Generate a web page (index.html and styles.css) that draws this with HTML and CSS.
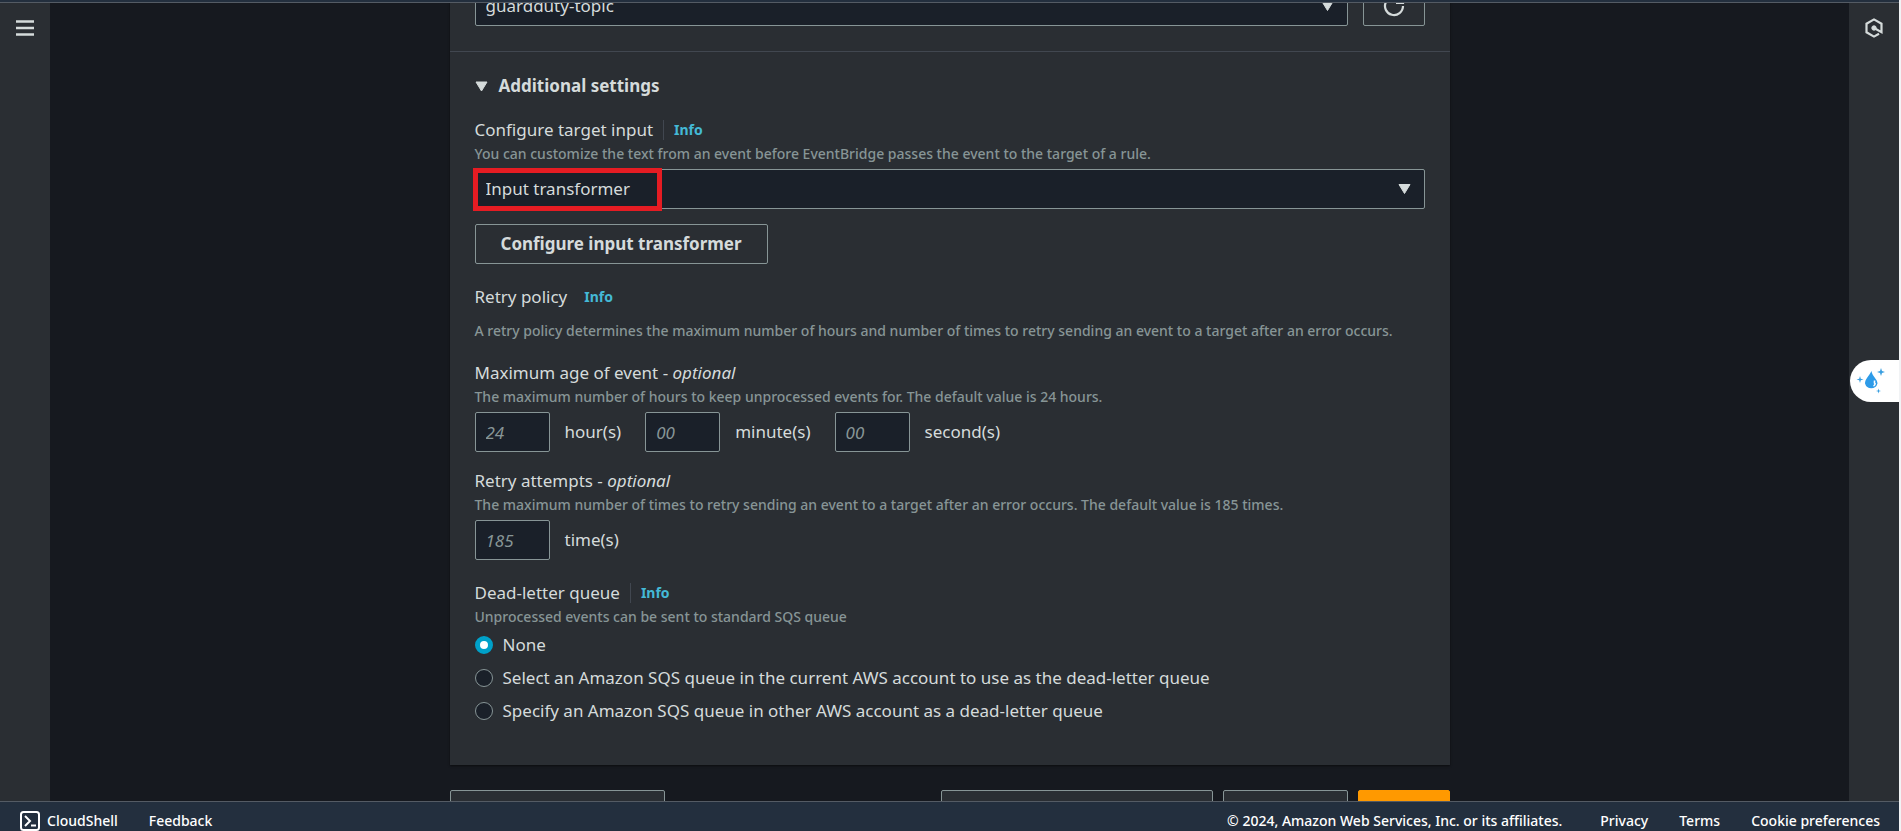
FILE: index.html
```html
<!DOCTYPE html>
<html lang="en">
<head>
<meta charset="utf-8">
<title>Amazon EventBridge</title>
<link rel="stylesheet" href="styles.css">
</head>
<body>
<div class="topbar"></div>
<div class="workspace">
  <nav class="rail rail-left">
    <button class="icon-button" aria-label="Open navigation">
      <svg width="18" height="16" viewBox="0 0 18 16"><path d="M0 1.5h18M0 8h18M0 14.5h18" stroke="currentColor" stroke-width="2.4"/></svg>
    </button>
  </nav>
  <main class="content">
    <div class="container">
      <section class="card">
        <div class="topic-row">
          <div class="select-wrap">
            <select class="select" aria-label="Topic"><option>guardduty-topic</option></select>
            <svg class="caret" width="13" height="10" viewBox="0 0 13 10"><path d="M1 .5h11L6.500 9.500z" fill="currentColor" stroke="currentColor" stroke-linejoin="round"/></svg>
          </div>
          <button class="btn refresh" aria-label="Refresh">
            <svg width="22" height="22" viewBox="0 0 22 22" fill="none" stroke="currentColor" stroke-width="2.200"><path d="M20 11a9 9 0 1 1-3-6.700M20 1v7h-7"/></svg>
          </button>
        </div>
        <details class="settings" open>
          <summary class="summary">
            <svg width="13" height="11" viewBox="0 0 13 11"><path d="M1 1h11L6.500 10z" fill="currentColor" stroke="currentColor" stroke-linejoin="round"/></svg>
            Additional settings
          </summary>
          <div class="field">
            <div class="label-row">
              <label for="target-input">Configure target input</label>
              <a class="info divided" href="#">Info</a>
            </div>
            <p class="hint">You can customize the text from an event before EventBridge passes the event to the target of a rule.</p>
            <div class="select-wrap control">
              <select class="select" id="target-input"><option>Input transformer</option></select>
              <svg class="caret" width="13" height="10" viewBox="0 0 13 10"><path d="M1 .5h11L6.500 9.500z" fill="currentColor" stroke="currentColor" stroke-linejoin="round"/></svg>
              <span class="highlight"></span>
            </div>
            <button class="btn configure">Configure input transformer</button>
          </div>
          <div class="policy">
            <div class="label-row"><span>Retry policy</span><a class="info" href="#">Info</a></div>
            <p class="hint">A retry policy determines the maximum number of hours and number of times to retry sending an event to a target after an error occurs.</p>
          </div>
          <div class="field">
            <div class="label-row"><span>Maximum age of event - <em>optional</em></span></div>
            <p class="hint">The maximum number of hours to keep unprocessed events for. The default value is 24 hours.</p>
            <div class="units control">
              <div class="unit"><input class="input" id="hours" placeholder="24"><label for="hours">hour(s)</label></div>
              <div class="unit"><input class="input" id="minutes" placeholder="00"><label for="minutes">minute(s)</label></div>
              <div class="unit"><input class="input" id="seconds" placeholder="00"><label for="seconds">second(s)</label></div>
            </div>
          </div>
          <div class="field attempts">
            <div class="label-row"><span>Retry attempts - <em>optional</em></span></div>
            <p class="hint">The maximum number of times to retry sending an event to a target after an error occurs. The default value is 185 times.</p>
            <div class="units control">
              <div class="unit"><input class="input" id="times" placeholder="185"><label for="times">time(s)</label></div>
            </div>
          </div>
          <div class="field" role="radiogroup" aria-labelledby="dlq">
            <div class="label-row"><span id="dlq">Dead-letter queue</span><a class="info divided" href="#">Info</a></div>
            <p class="hint">Unprocessed events can be sent to standard SQS queue</p>
            <div class="radios">
              <label class="radio"><input type="radio" name="dlq" checked>None</label>
              <label class="radio"><input type="radio" name="dlq">Select an Amazon SQS queue in the current AWS account to use as the dead-letter queue</label>
              <label class="radio"><input type="radio" name="dlq">Specify an Amazon SQS queue in other AWS account as a dead-letter queue</label>
            </div>
          </div>
        </details>
      </section>
      <div class="actions">
        <button class="btn action-wide" aria-label="Add another target"></button>
        <button class="btn action-skip" aria-label="Skip to review"></button>
        <button class="btn action-prev" aria-label="Previous"></button>
        <button class="btn action-next" aria-label="Next"></button>
      </div>
    </div>
  </main>
  <aside class="rail rail-right">
    <button class="icon-button" aria-label="Amazon Q">
      <svg width="20" height="20" viewBox="0 0 20 20" fill="none" stroke="currentColor" stroke-width="2.200"><path d="M10 10l7.500 4.200V5.700L10 1.400 2.500 5.700v8.600l7.500 4.300 5-2.900"/><circle cx="10" cy="10" r="2.200" fill="currentColor" stroke-width="1"/></svg>
    </button>
    <button class="droplet" aria-label="Assistant">
      <svg width="30" height="26" viewBox="0 0 30 26"><path d="M15.500 3C13 8 9 11 9 15.500a6.500 6.500 0 0 0 12.500 0C21.500 11 16 8 15.500 3z" fill="#2e9be8"/><path d="M18.500 12.500v3M17.500 18q1.800-.8 1.600-2.800" stroke="#fff" stroke-width="1.600" fill="none"/><path d="M25 0l1 3 3 1-3 1-1 3-1-3-3-1 3-1zM4 8l.8 2.700L7.500 11.500l-2.700.8L4 15l-.8-2.700L.5 11.500l2.700-.8zM22.500 20.500l.6 1.900 1.900.6-1.900.6-.6 1.900-.6-1.900-1.900-.6 1.900-.6z" fill="#3a9fe0"/></svg>
    </button>
  </aside>
</div>
<footer class="footer">
  <a class="shell" href="#">
    <svg width="20" height="20" viewBox="0 0 20 20" fill="none" stroke="currentColor" stroke-width="2"><rect x="1" y="1" width="18" height="18" rx="2.500"/><path d="M5 5l5 5-5 5M11 14.500h5"/></svg>
    CloudShell
  </a>
  <a class="feedback" href="#">Feedback</a>
  <span class="copyright">© 2024, Amazon Web Services, Inc. or its affiliates.</span>
  <a href="#">Privacy</a>
  <a href="#">Terms</a>
  <a href="#">Cookie preferences</a>
</footer>
</body>
</html>
```
FILE: styles.css
```css
* { box-sizing: border-box; }

body {
  margin: 0;
  height: 100vh;
  display: flex;
  flex-direction: column;
  overflow: hidden;
  border-right: 2px solid #f1f3f5;
  background: #16191f;
  color: #d5dbdb;
  font: 17px/24px "Noto Sans", "Open Sans", sans-serif;
}

button, input, select { font: inherit; color: inherit; }
button { cursor: pointer; }
a { color: inherit; text-decoration: none; }
svg { display: block; flex: none; }

.topbar {
  flex: none;
  height: 3px;
  background: #232f3e;
  border-bottom: 1px solid #545b64;
}

.workspace { flex: 1; min-height: 0; display: flex; }

.rail {
  flex: none;
  width: 50px;
  background: #2a2e33;
  padding-top: 15px;
  display: flex;
  flex-direction: column;
  align-items: center;
}
.rail-right { position: relative; }

.icon-button {
  border: 0;
  background: none;
  padding: 0;
  height: 20px;
  display: flex;
  align-items: center;
}

.droplet {
  position: absolute;
  right: 0;
  top: 357px;
  width: 49px;
  height: 42px;
  border: 0;
  border-radius: 21px 0 0 21px;
  background: #fff;
  padding: 0 0 0 6px;
  display: flex;
  align-items: center;
}

.content { flex: 1; min-width: 0; overflow: hidden; }
.container { max-width: 1000px; margin: -17px auto 0; }

.card { background: #2a2e33; box-shadow: 0 1px 2px #0008; }

.topic-row { display: flex; gap: 15px; padding: 0 25px 25px; }
.topic-row .select-wrap { flex: 1; }

.select-wrap { position: relative; }
.select, .input {
  display: block;
  height: 40px;
  border: 1px solid #879596;
  border-radius: 2px;
  background: #1a2029;
  padding: 0 10px;
}
.select { width: 100%; appearance: none; }
.input { width: 75px; }
.input::placeholder { color: #879596; font-style: italic; opacity: 1; }
.caret { position: absolute; right: 14px; top: 15px; pointer-events: none; }
.highlight {
  position: absolute;
  left: -2px;
  top: -1px;
  width: 189px;
  height: 43px;
  border: 5px solid #e51c23;
  pointer-events: none;
}

.btn {
  height: 40px;
  border: 1px solid #879596;
  border-radius: 2px;
  background: #2a2e33;
  font-weight: 700;
  padding: 0 25px;
}
.refresh { width: 62px; padding: 0; display: flex; align-items: center; justify-content: center; }
.configure { display: block; margin-top: 15px; }

.settings { border-top: 1px solid #414750; padding: 22px 25px 42px; }
.summary {
  display: flex;
  align-items: center;
  gap: 11px;
  font-weight: 700;
  list-style: none;
  margin-bottom: 20px;
}

.label-row { display: flex; align-items: center; }
.info { color: #44b9d6; font-size: 14px; line-height: 20px; font-weight: 700; margin-left: 17px; }
.divided { border-left: 1px solid #414750; margin-left: 10px; padding-left: 10px; }
.hint { margin: 2px 0 0; color: #879596; font-size: 14px; line-height: 20px; font-weight: 500; }
.control { margin-top: 5px; }

.policy { margin: 21px 0 20px; }
.policy .hint { margin-top: 12px; }

.units { display: flex; gap: 24px; }
.unit { display: flex; align-items: center; gap: 15px; }
.attempts { margin: 17px 0 21px; }

.radios { display: grid; gap: 9px; margin-top: 6px; }
.radio { display: flex; align-items: center; gap: 10px; }
.radio input {
  appearance: none;
  flex: none;
  width: 18px;
  height: 18px;
  margin: 0;
  border: 1px solid #879596;
  border-radius: 50%;
  background: #1a2029;
}
.radio input:checked { border: 5px solid #00a1c9; background: #fff; }

.actions { display: flex; gap: 10px; padding-top: 25px; }
.action-wide { width: 215px; margin-right: auto; }
.action-skip { width: 272px; }
.action-prev { width: 125px; }
.action-next { width: 92px; background: #f90; border-color: #f90; }

.footer {
  flex: none;
  height: 30px;
  border-top: 1px solid #545b64;
  background: #232f3e;
  color: #fff;
  font-size: 14px;
  line-height: 20px;
  font-weight: 500;
  padding: 9px 19px 0 20px;
  display: flex;
  gap: 31px;
}
.shell { display: flex; gap: 7px; }
.copyright { margin-left: auto; margin-right: 7px; }
```
